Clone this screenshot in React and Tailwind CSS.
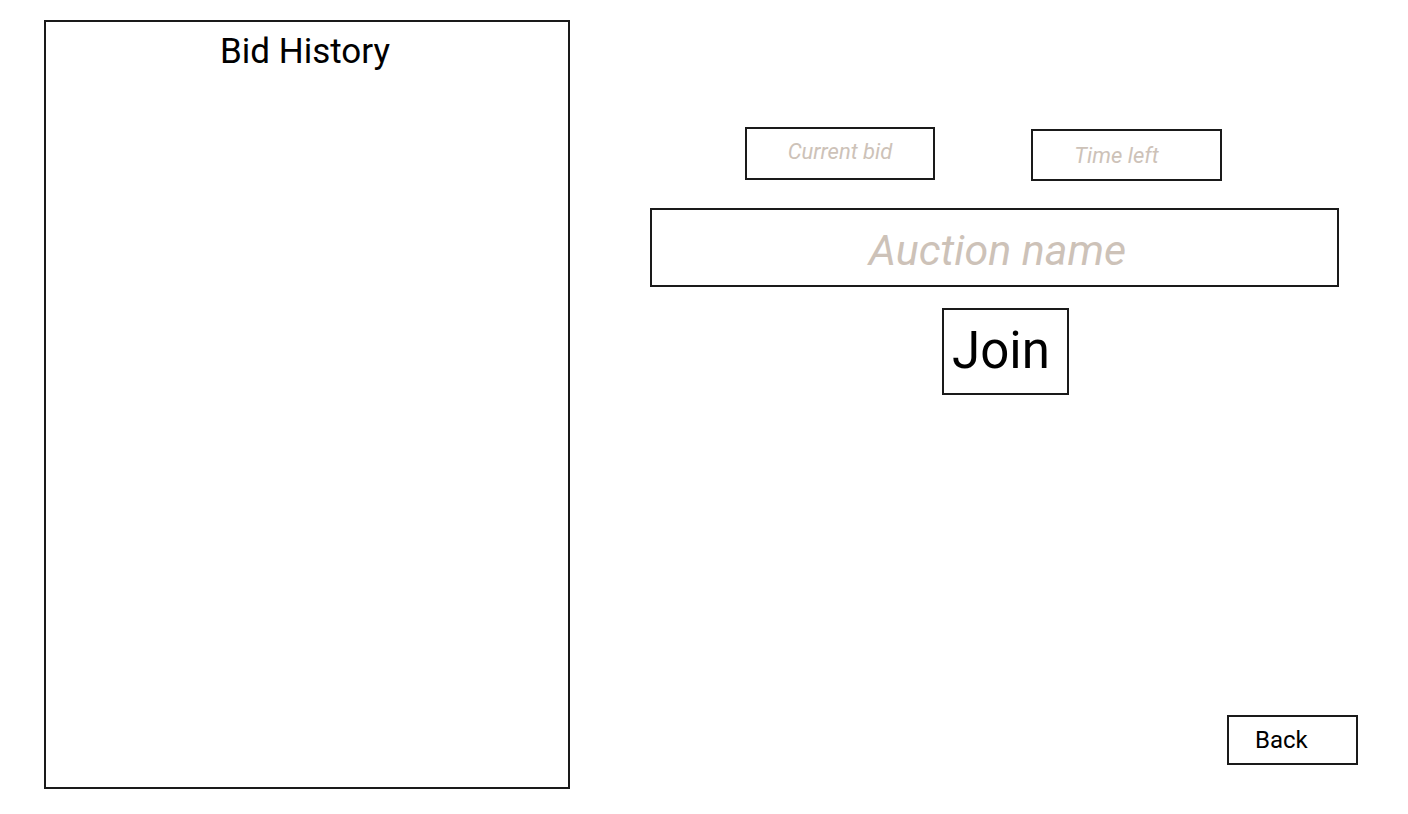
export default function App() {
  return (
    <div className="flex h-[814px] w-[1408px] bg-white font-['Roboto',sans-serif] text-black">
      {/* Bid history panel */}
      <div className="ml-[44px] mt-[20px] flex h-[769px] w-[526px] flex-col items-center border-2 border-[#1a1a1a]">
        <h2 className="mt-[10px] pr-[4px] text-[35px] leading-[40px]">Bid History</h2>
      </div>

      {/* Auction details */}
      <div className="ml-[80px] flex flex-col">
        <div className="mt-[127px] flex items-start">
          <div className="ml-[95px] flex h-[53px] w-[190px] items-center justify-center border-2 border-[#1a1a1a] pb-[4px]">
            <span className="text-[22px] italic text-[#cdc2b8]">Current bid</span>
          </div>
          <div className="ml-[96px] mt-[2px] flex h-[52px] w-[191px] items-center justify-center border-2 border-[#1a1a1a] pr-[20px]">
            <span className="text-[22px] italic text-[#cdc2b8]">Time left</span>
          </div>
        </div>

        <div className="mt-[27px] flex h-[79px] w-[689px] items-center justify-center border-2 border-[#1a1a1a] pl-[6px] pt-[6px]">
          <span className="text-[43px] italic text-[#cdc2b8]">Auction name</span>
        </div>

        <button className="ml-[292px] mt-[21px] flex h-[87px] w-[127px] items-center justify-center border-2 border-[#1a1a1a] pr-[9px]">
          <span className="text-[51px]">Join</span>
        </button>

        <button className="ml-[577px] mt-[320px] flex h-[50px] w-[131px] items-center border-2 border-[#1a1a1a] pl-[26px]">
          <span className="text-[24px]">Back</span>
        </button>
      </div>
    </div>
  );
}
